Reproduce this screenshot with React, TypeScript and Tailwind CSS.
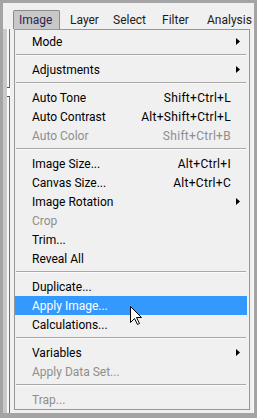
import React from "react";

type Item =
  | "sep"
  | { t: string; k?: string; arrow?: boolean; dis?: boolean; hl?: boolean };

const items: Item[] = [
  { t: "Mode", arrow: true },
  "sep",
  { t: "Adjustments", arrow: true },
  "sep",
  { t: "Auto Tone", k: "Shift+Ctrl+L" },
  { t: "Auto Contrast", k: "Alt+Shift+Ctrl+L" },
  { t: "Auto Color", k: "Shift+Ctrl+B", dis: true },
  "sep",
  { t: "Image Size...", k: "Alt+Ctrl+I" },
  { t: "Canvas Size...", k: "Alt+Ctrl+C" },
  { t: "Image Rotation", arrow: true },
  { t: "Crop", dis: true },
  { t: "Trim..." },
  { t: "Reveal All" },
  "sep",
  { t: "Duplicate..." },
  { t: "Apply Image...", hl: true },
  { t: "Calculations..." },
  "sep",
  { t: "Variables", arrow: true },
  { t: "Apply Data Set...", dis: true },
  "sep",
  { t: "Trap...", dis: true },
];

function Arrow() {
  return (
    <svg width="4" height="7" viewBox="0 0 4 7" className="block">
      <polygon points="0,0 4,3.5 0,7" fill="#000" />
    </svg>
  );
}

export default function App() {
  return (
    <div
      className="relative w-[257px] h-[418px] bg-[#a4a4a4] pt-[3px] pl-[3px] pr-[3px] pb-[5px] overflow-hidden"
      style={{ fontFamily: "Roboto, 'Liberation Sans', sans-serif" }}
    >
      <div className="h-full bg-[#f0f0f0] flex flex-col">
        {/* menu bar */}
        <div className="h-[26px] flex items-start pt-[7px] pl-[10px] text-[12px] text-[#1b1b1b]">
          <div className="w-[47px] h-[19px] border border-b-0 border-[#8a8a8a] rounded-t-[2px] bg-[#c8c8c8] pl-[5px] leading-[18px] text-[#2c2650]">
            Image
          </div>
          <div className="w-[44px] pl-[10px] leading-[20px]">Layer</div>
          <div className="w-[50px] pl-[9px] leading-[20px]">Select</div>
          <div className="w-[44px] pl-[8px] leading-[20px]">Filter</div>
          <div className="pl-[9px] leading-[20px] whitespace-nowrap">Analysis</div>
        </div>

        {/* body */}
        <div className="flex flex-1 min-h-0">
          <div className="w-[4px] bg-[#c9c9c9]" />
          <div className="w-[2px] bg-[#f8f8f8] relative">
            <div className="absolute top-[58px] left-0 w-[3px] h-[10px] border-y border-[#555] bg-white" />
          </div>
          <div className="w-[1px] bg-[#6e6e6e]" />
          <div className="w-[4px]" />

          {/* dropdown */}
          <div className="w-[236px] h-[381px] border border-[#979797] bg-[#f0f0f0] pt-[2px] pr-[2px] text-[12px]">
            {items.map((it, i) =>
              it === "sep" ? (
                <div key={i} className="h-[9px] pt-[3px] px-[1px]">
                  <div className="h-[1px] bg-[#a8a8a8]" />
                  <div className="h-[1px] bg-[#fbfbfb]" />
                </div>
              ) : (
                <div
                  key={i}
                  className={
                    "h-[19px] flex items-center pl-[17px] " +
                    (it.hl
                      ? "bg-[#3399ff] text-white"
                      : it.dis
                      ? "text-[#8e8e8e]"
                      : "text-[#000000]")
                  }
                >
                  <span className="flex-1 whitespace-nowrap">{it.t}</span>
                  {it.k && (
                    <span className="whitespace-nowrap tracking-[0.3px]">{it.k}</span>
                  )}
                  <span className="w-[16px] pl-[5px] flex items-center">
                    {it.arrow && <Arrow />}
                  </span>
                </div>
              )
            )}
          </div>

          <div className="w-[3px]" />
          <div className="w-[1px] bg-[#fbfbfb]" />
        </div>
      </div>

      {/* mouse cursor */}
      <svg
        width="13"
        height="20"
        viewBox="0 0 13 20"
        className="absolute left-[130px] top-[306px]"
      >
        <path
          d="M0.5,0.5 L0.5,16.5 L4.5,12.5 L7.5,18.5 L9.5,17.5 L6.5,11.5 L11.5,11.5 Z"
          fill="#fff"
          stroke="#000"
          strokeWidth="1"
          strokeLinejoin="miter"
        />
      </svg>
    </div>
  );
}
